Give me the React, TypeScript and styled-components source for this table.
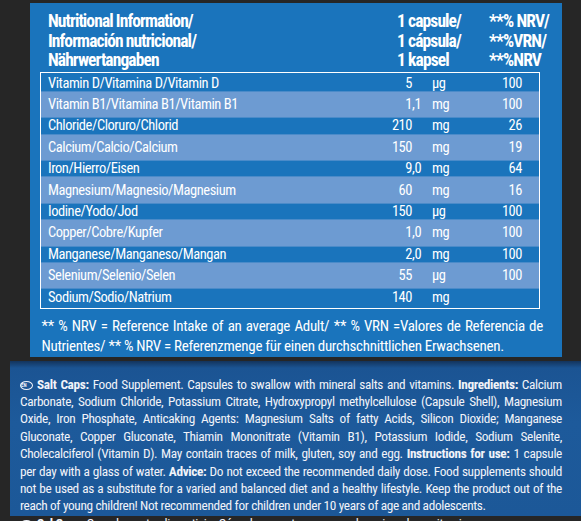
import styled, { createGlobalStyle } from "styled-components";

const GlobalStyle = createGlobalStyle`
  html, body {
    margin: 0;
    padding: 0;
    background: #262626;
    overflow: hidden;
  }
  body {
    font-family: "Roboto Condensed", "Noto Sans", "Roboto", "Liberation Sans", sans-serif;
    font-stretch: condensed;
  }
`;

// css
const Page = styled.div`
  width: 581px;
  height: 521px;
  padding-top: 3px;
  box-sizing: border-box;
  display: flex;
  flex-direction: column;
  gap: 3.5px;
`;

const Panel = styled.section`
  margin-left: 30px;
  width: 532px;
  height: 354px;
  box-sizing: border-box;
  padding: 9px 19px 0 10px;
  background-color: #1a74bc;
  color: #ffffff;
`;

const Header = styled.div`
  display: grid;
  grid-template-columns: 349px 92px 1fr;
  padding-left: 8px;
  font-weight: 700;
  font-size: 17.5px;
  line-height: 19.5px;
  letter-spacing: -0.9px;
  white-space: nowrap;
`;

const Table = styled.div`
  margin-top: 1px;
  width: 500px;
  box-sizing: border-box;
  border: 1.5px solid #ffffff;
`;

const Row = styled.div<{ $light: boolean }>`
  display: grid;
  grid-template-columns: 1fr 40px 20px 50px 40px;
  padding: 0 17px 0 7px;
  height: 21.4px;
  align-items: center;
  font-size: 14.5px;
  line-height: 21px;
  letter-spacing: -0.45px;
  background-color: ${(p) => (p.$light ? "#6d9bd2" : "transparent")};
  box-shadow: ${(p) =>
    p.$light ? "0 -2.6px 0 #6d9bd2, 0 2.6px 0 #6d9bd2" : "none"};
`;

const Name = styled.span`
  white-space: nowrap;
`;

const Amount = styled.span`
  text-align: right;
`;

const Fraction = styled.span`
  text-align: left;
`;

const Unit = styled.span`
  text-align: left;
`;

const Nrv = styled.span`
  text-align: right;
`;

const Footnote = styled.div`
  margin-top: 8.5px;
  padding-left: 1.5px;
  font-size: 15px;
  line-height: 19.5px;
  letter-spacing: -0.3px;
`;

const Line = styled.div<{ $justify?: boolean }>`
  white-space: nowrap;
  text-align: ${(p) => (p.$justify ? "justify" : "left")};
  text-align-last: ${(p) => (p.$justify ? "justify" : "left")};
`;

const Legal = styled.section`
  margin-left: 10px;
  width: 571px;
  height: 155px;
  box-sizing: border-box;
  padding: 15px 19px 0 10px;
  background: linear-gradient(180deg, #13345c 0, #1b5493 7px, #1d5a9b 40%, #1c5898 100%);
  color: #f1f3f9;
  font-size: 13.3px;
  line-height: 17.4px;
  letter-spacing: -0.35px;
`;

const Bold = styled.b`
  font-weight: 700;
`;

const LangBadge = styled.span`
  display: inline-block;
  width: 11px;
  height: 7px;
  margin-right: 4px;
  border: 1.2px solid #f1f3f9;
  border-radius: 50%;
  font-size: 5px;
  line-height: 7px;
  letter-spacing: 0;
  text-align: center;
  font-weight: 700;
  vertical-align: 2px;
`;

type Nutrient = {
  name: string;
  amount: string;
  unit: string;
  nrv: string;
};

const nutrients: Nutrient[] = [
  { name: "Vitamin D/Vitamina D/Vitamin D", amount: "5", unit: "µg", nrv: "100" },
  { name: "Vitamin B1/Vitamina B1/Vitamin B1", amount: "1,1", unit: "mg", nrv: "100" },
  { name: "Chloride/Cloruro/Chlorid", amount: "210", unit: "mg", nrv: "26" },
  { name: "Calcium/Calcio/Calcium", amount: "150", unit: "mg", nrv: "19" },
  { name: "Iron/Hierro/Eisen", amount: "9,0", unit: "mg", nrv: "64" },
  { name: "Magnesium/Magnesio/Magnesium", amount: "60", unit: "mg", nrv: "16" },
  { name: "Iodine/Yodo/Jod", amount: "150", unit: "µg", nrv: "100" },
  { name: "Copper/Cobre/Kupfer", amount: "1,0", unit: "mg", nrv: "100" },
  { name: "Manganese/Manganeso/Mangan", amount: "2,0", unit: "mg", nrv: "100" },
  { name: "Selenium/Selenio/Selen", amount: "55", unit: "µg", nrv: "100" },
  { name: "Sodium/Sodio/Natrium", amount: "140", unit: "mg", nrv: "" },
];

function App() {
  return (
    <>
      <GlobalStyle />
      <Page>
        <Panel>
          <Header>
            <span>
              Nutritional Information/
              <br />
              Información nutricional/
              <br />
              Nährwertangaben
            </span>
            <span>
              1 capsule/
              <br />
              1 cápsula/
              <br />1 kapsel
            </span>
            <span>
              **% NRV/
              <br />
              **%VRN/
              <br />
              **%NRV
            </span>
          </Header>

          <Table>
            {nutrients.map((n, i) => {
              const [whole, frac] = n.amount.split(",");
              return (
                <Row key={n.name} $light={i % 2 === 1}>
                  <Name>{n.name}</Name>
                  <Amount>{whole}</Amount>
                  <Fraction>{frac ? "," + frac : ""}</Fraction>
                  <Unit>{n.unit}</Unit>
                  <Nrv>{n.nrv}</Nrv>
                </Row>
              );
            })}
          </Table>

          <Footnote>
            <Line $justify>
              ** % NRV = Reference Intake of an average Adult/ ** % VRN =Valores de Referencia de
            </Line>
            <Line>
              Nutrientes/ ** % NRV = Referenzmenge für einen durchschnittlichen Erwachsenen.
            </Line>
          </Footnote>
        </Panel>

        <Legal>
          <Line $justify>
            <LangBadge>EN</LangBadge>
            <Bold>Salt Caps:</Bold> Food Supplement. Capsules to swallow with mineral salts and
            vitamins. <Bold>Ingredients:</Bold> Calcium
          </Line>
          <Line $justify>
            Carbonate, Sodium Chloride, Potassium Citrate, Hydroxypropyl methylcellulose (Capsule
            Shell), Magnesium
          </Line>
          <Line $justify>
            Oxide, Iron Phosphate, Anticaking Agents: Magnesium Salts of fatty Acids, Silicon
            Dioxide; Manganese
          </Line>
          <Line $justify>
            Gluconate, Copper Gluconate, Thiamin Mononitrate (Vitamin B1), Potassium Iodide, Sodium
            Selenite,
          </Line>
          <Line $justify>
            Cholecalciferol (Vitamin D). May contain traces of milk, gluten, soy and egg.{" "}
            <Bold>Instructions for use:</Bold> 1 capsule
          </Line>
          <Line $justify>
            per day with a glass of water. <Bold>Advice:</Bold> Do not exceed the recommended daily
            dose. Food supplements should
          </Line>
          <Line $justify>
            not be used as a substitute for a varied and balanced diet and a healthy lifestyle. Keep
            the product out of the
          </Line>
          <Line>
            reach of young children! Not recommended for children under 10 years of age and
            adolescents.
          </Line>
          <Line>
            <LangBadge>ES</LangBadge>
            <Bold>Sal Caps:</Bold> Complemento alimenticio. Cápsulas para tragar con sales
            minerales y vitaminas.
          </Line>
        </Legal>
      </Page>
    </>
  );
}

export default App;
